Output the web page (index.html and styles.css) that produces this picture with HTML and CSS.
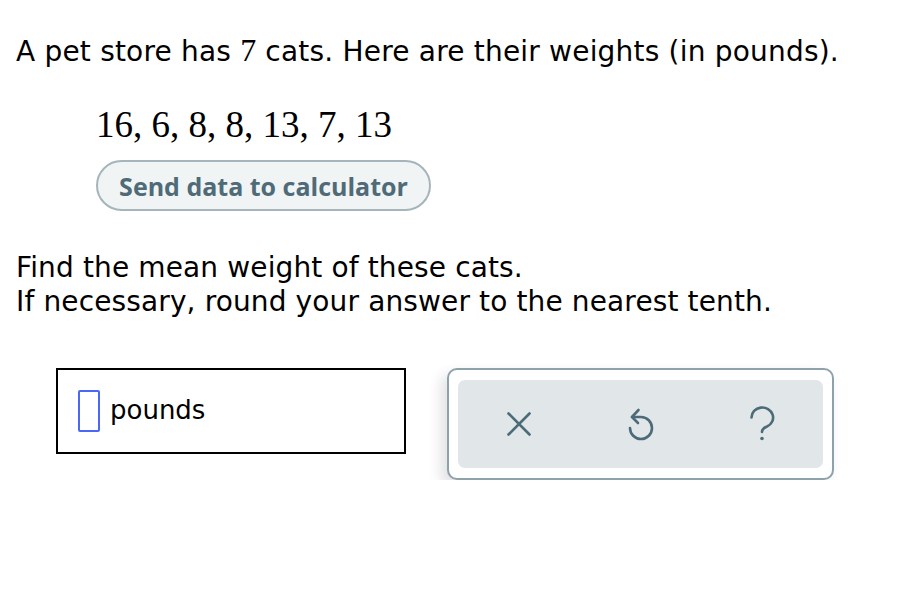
FILE: index.html
```html
<!DOCTYPE html>
<html>
<head>
<meta charset="utf-8">
<link rel="stylesheet" href="styles.css">
</head>
<body>
<div class="page">
  <p class="intro">A pet store has <span class="num">7</span> cats. Here are their weights (in pounds).</p>
  <div class="data">
    <div class="values">16, 6, 8, 8, 13, 7, 13</div>
    <button class="send">Send data to calculator</button>
  </div>
  <p class="question">Find the mean weight of these cats.<br>If necessary, round your answer to the nearest tenth.</p>
  <div class="answer-row">
    <div class="answer">
      <span class="cursor"></span>
      <span class="unit">pounds</span>
    </div>
    <div class="tools">
      <div class="tools-inner">
        <div class="tool">
          <svg width="26" height="26" viewBox="0 0 26 26"><path d="M2.5 2.5 L23.5 23.5 M23.5 2.5 L2.5 23.5" stroke="#4b6b79" stroke-width="2.6" stroke-linecap="round" fill="none"/></svg>
        </div>
        <div class="tool">
          <svg width="30" height="36" viewBox="0 0 30 36"><path d="M6 11 H15 A11 11 0 1 1 4 22" stroke="#4b6b79" stroke-width="2.6" stroke-linecap="round" stroke-linejoin="round" fill="none"/><path d="M12.5 4 L6 11 L12 17" stroke="#4b6b79" stroke-width="2.6" stroke-linecap="round" stroke-linejoin="round" fill="none"/></svg>
        </div>
        <div class="tool">
          <svg width="26" height="38" viewBox="0 0 26 38"><path d="M2.5 12.5 A10.8 10 0 1 1 18 21.5 Q13 23.5 13 27" stroke="#4b6b79" stroke-width="2.6" stroke-linecap="round" fill="none"/><circle cx="13" cy="33.5" r="1.8" fill="#4b6b79"/></svg>
        </div>
      </div>
    </div>
  </div>
</div>
</body>
</html>
```
FILE: styles.css
```css
html, body {
  margin: 0;
  padding: 0;
  background: #fff;
}
.page {
  padding: 32px 0 0 16px;
  font-family: Verdana, "DejaVu Sans", sans-serif;
  color: #000;
}
.intro {
  margin: 0;
  font-size: 28px;
  line-height: 40px;
  letter-spacing: 0.2px;
}
.num {
  font-family: "Liberation Serif", "Times New Roman", serif;
  font-size: 32px;
  line-height: 1;
  letter-spacing: 0;
}
.data {
  padding: 31px 0 0 80px;
}
.values {
  font-family: "Liberation Serif", "Times New Roman", serif;
  font-size: 37px;
  line-height: 44px;
}
.send {
  display: block;
  box-sizing: border-box;
  margin-top: 13px;
  height: 51px;
  width: 335px;
  border: 2px solid #a6b4bb;
  border-radius: 26px;
  background: #f1f4f5;
  color: #4f6b78;
  font-family: "Open Sans", "Liberation Sans", sans-serif;
  font-weight: 700;
  font-size: 25px;
  padding: 0;
}
.question {
  margin: 40px 0 0 0;
  font-size: 28px;
  line-height: 34px;
  letter-spacing: 0.13px;
}
.answer-row {
  display: flex;
  align-items: flex-start;
  margin-top: 49px;
  padding-left: 40px;
  gap: 41px;
}
.answer {
  box-sizing: border-box;
  width: 350px;
  height: 86px;
  border: 2px solid #000;
  display: flex;
  align-items: center;
  padding: 0 0 0 20px;
  gap: 10px;
}
.cursor {
  box-sizing: border-box;
  width: 22px;
  height: 42px;
  border: 2px solid #4a68f5;
  border-radius: 2px;
}
.unit {
  font-size: 26px;
  margin-top: -3px;
}
.tools {
  box-sizing: border-box;
  width: 387px;
  height: 112px;
  border: 2px solid #8ea2ac;
  border-radius: 10px;
  padding: 10px 9px;
  background: #fff;
  box-shadow: -6px 6px 14px rgba(0, 0, 0, 0.12);
}
.tools-inner {
  height: 100%;
  background: #e1e6e9;
  border-radius: 7px;
  display: flex;
  align-items: center;
}
.tool {
  flex: 1;
  display: flex;
  justify-content: center;
}
.tool svg {
  display: block;
}
```
